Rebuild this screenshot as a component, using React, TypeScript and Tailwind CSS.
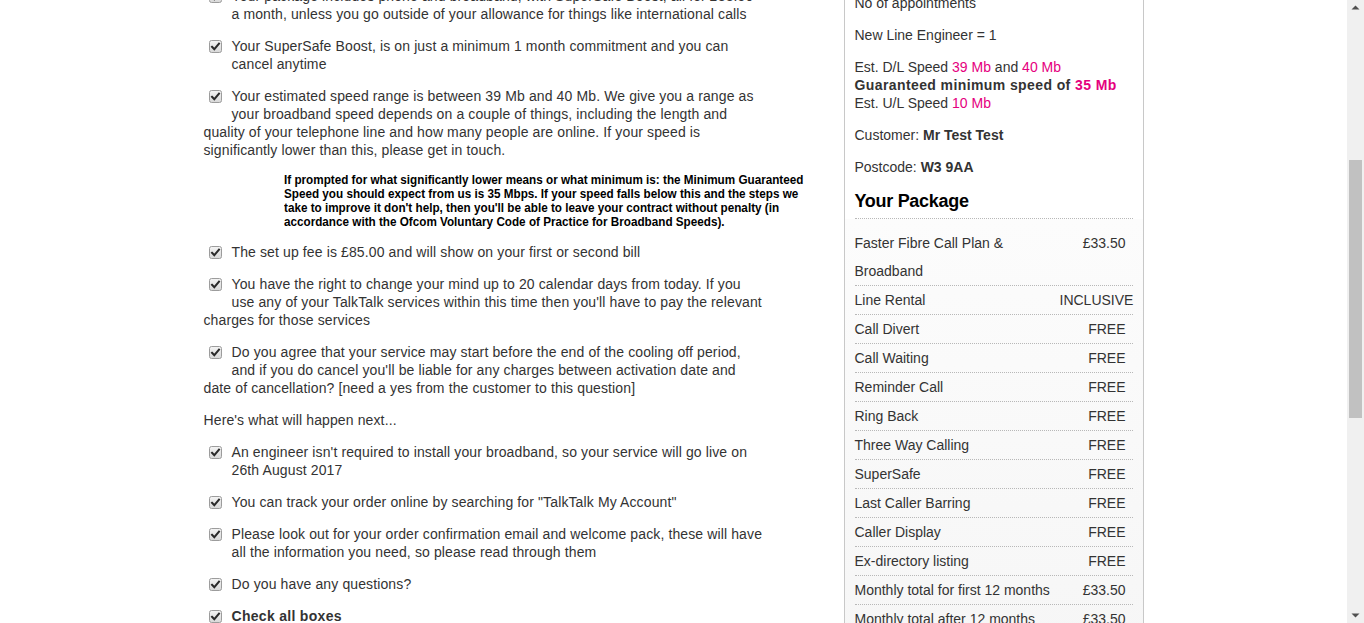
import React from "react";

function Check() {
  return (
    <svg width="13" height="13" viewBox="0 0 13 13" className="block">
      <defs>
        <linearGradient id="cbg" x1="0" y1="0" x2="0" y2="1">
          <stop offset="0" stopColor="#f4f4f4" />
          <stop offset="1" stopColor="#d8d8d8" />
        </linearGradient>
      </defs>
      <rect x="0.5" y="0.5" width="12" height="12" rx="2" fill="url(#cbg)" stroke="#9c9c9c" />
      <path d="M3 6.8 L5.3 9.2 L10 3.6" fill="none" stroke="#2a2a2a" strokeWidth="2" strokeLinecap="square" />
    </svg>
  );
}

function Item({ children, strong = false }: { children: React.ReactNode; strong?: boolean }) {
  return (
    <div
      className={
        "mb-[14px] w-[561px] text-[14px] leading-[18px] text-[#333] " +
        (strong ? "font-bold tracking-[0.3px]" : "tracking-[0.12px]")
      }
    >
      <span className="float-left h-[26px] w-[28px] pl-[5px] pt-[3px]">
        <Check />
      </span>
      {children}
    </div>
  );
}

const Pink = ({ children }: { children: React.ReactNode }) => (
  <span className="text-[#e5007e]">{children}</span>
);

function Row({ label, value, pr = "pr-[7px]" }: { label: string; value: string; pr?: string }) {
  return (
    <div className="grid grid-cols-[205px_1fr] border-b border-dotted border-[#b8b8b8] leading-[28px]">
      <div>{label}</div>
      <div className={"text-right " + pr}>{value}</div>
    </div>
  );
}

export default function App() {
  const rows: [string, string][] = [
    ["Call Divert", "FREE"],
    ["Call Waiting", "FREE"],
    ["Reminder Call", "FREE"],
    ["Ring Back", "FREE"],
    ["Three Way Calling", "FREE"],
    ["SuperSafe", "FREE"],
    ["Last Caller Barring", "FREE"],
    ["Caller Display", "FREE"],
    ["Ex-directory listing", "FREE"],
    ["Monthly total for first 12 months", "£33.50"],
    ["Monthly total after 12 months", "£33.50"],
  ];
  return (
    <div className="flex h-[623px] w-full overflow-hidden bg-white font-['Liberation_Sans',Arial,sans-serif] text-[14px] text-[#333]">
      <div className="flex-1 overflow-hidden">
        <div className="mx-auto mt-[-13px] flex w-[940px] items-start justify-between">
          {/* Left column */}
          <div className="w-[620px]">
            <Item>
              Your package includes phone and broadband, with SuperSafe Boost, all for £33.50 a{"\u00a0"}month, unless you go outside of your allowance for things like international calls
            </Item>
            <Item>Your SuperSafe Boost, is on just a minimum 1 month commitment and you can cancel anytime</Item>
            <Item>
              Your estimated speed range is between 39 Mb and 40 Mb. We give you a range as your broadband speed depends on a couple of things, including the length and quality of your telephone line and how many people are online. If your speed is significantly lower than this, please get in touch.
            </Item>
            <div className="mb-[14px] ml-[80px] h-[56px] w-[526px]">
              <p className="w-[584px] origin-top-left scale-x-[0.9] text-[13px] font-bold leading-[14px] text-black">
                If prompted for what significantly lower means or what minimum is: the Minimum Guaranteed Speed you should expect from us is 35 Mbps. If your speed falls below this and the steps we take to improve it don't help, then you'll be able to leave your contract without penalty (in accordance with the Ofcom Voluntary Code of Practice for Broadband Speeds).
              </p>
            </div>
            <Item>The set up fee is £85.00 and will show on your first or second bill</Item>
            <Item>
              You have the right to change your mind up to 20 calendar days from today. If you use any of your TalkTalk services within this time then you'll have to pay the relevant charges for those services
            </Item>
            <Item>
              Do you agree that your service may start before the end of the cooling off period, and if you do cancel you'll be liable for any charges between activation date and date of cancellation? [need a yes from the customer to this question]
            </Item>
            <p className="mb-[14px] leading-[18px] tracking-[0.12px]">Here's what will happen next...</p>
            <Item>An engineer isn't required to install your broadband, so your service will go live on 26th August 2017</Item>
            <Item>You can track your order online by searching for "TalkTalk My Account"</Item>
            <Item>
              Please look out for your order confirmation email and welcome pack, these will have all the information you need, so please read through them
            </Item>
            <Item>Do you have any questions?</Item>
            <Item strong>Check all boxes</Item>
          </div>

          {/* Right panel */}
          <div className="w-[300px] border border-[#c8c8c8] px-[10px] pt-[6px] leading-[18px]">
            <p className="mb-[14px]">No of appointments</p>
            <p className="mb-[14px]">New Line Engineer = 1</p>
            <div className="mb-[14px]">
              <div>
                Est. D/L Speed <Pink>39 Mb</Pink> and <Pink>40 Mb</Pink>
              </div>
              <div className="font-bold tracking-[0.4px]">
                Guaranteed minimum speed of <Pink>35 Mb</Pink>
              </div>
              <div>
                Est. U/L Speed <Pink>10 Mb</Pink>
              </div>
            </div>
            <p className="mb-[14px]">
              Customer: <b>Mr Test Test</b>
            </p>
            <p className="mb-[14px]">
              Postcode: <b>W3 9AA</b>
            </p>
            <h2 className="border-b border-dotted border-[#b8b8b8] pb-[6px] text-[18px] font-bold leading-[22px] tracking-[-0.3px] text-black">
              Your Package
            </h2>
            <div className="mx-[-10px] bg-[linear-gradient(#fcfcfc,#f6f6f6)] px-[10px] pt-[10px] pb-[20px]">
              <Row label="Faster Fibre Call Plan & Broadband" value="£33.50" />
              <Row label="Line Rental" value="INCLUSIVE" pr="pr-[2px]" />
              {rows.map(([l, v]) => (
                <Row key={l} label={l} value={v} />
              ))}
            </div>
          </div>
        </div>
      </div>

      {/* Scrollbar */}
      <div className="flex h-[623px] w-[17px] flex-col items-center bg-[#f0f0f0]">
        <svg width="17" height="17" viewBox="0 0 17 17" className="block">
          <path d="M4.5 9.5 L8.5 5.5 L12.5 9.5 Z" fill="#505050" />
        </svg>
        <div className="mt-[143px] h-[258px] w-[13px] bg-[#c1c1c1]" />
        <div className="flex-1" />
        <svg width="17" height="17" viewBox="0 0 17 17" className="block">
          <path d="M4.5 7.5 L8.5 11.5 L12.5 7.5 Z" fill="#505050" />
        </svg>
      </div>
    </div>
  );
}
